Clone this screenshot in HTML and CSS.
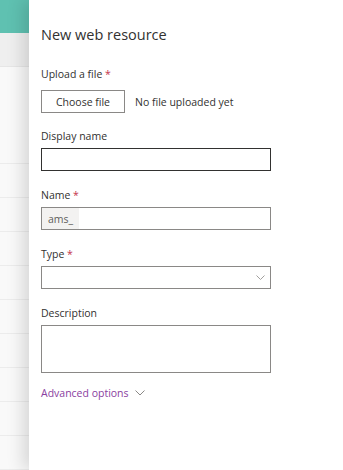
FILE: index.html
```html
<!DOCTYPE html>
<html lang="en">
<head>
  <meta charset="UTF-8">
  <title>New web resource</title>
  <link rel="stylesheet" href="styles.css">
</head>
<body>
  <div class="page">
    <div class="behind">
      <div class="topbar"></div>
      <div class="cmdbar"></div>
      <div class="row tall"></div>
      <div class="row"></div>
      <div class="row"></div>
      <div class="row"></div>
      <div class="row"></div>
      <div class="row"></div>
      <div class="row"></div>
      <div class="row"></div>
      <div class="row"></div>
      <div class="row"></div>
    </div>

    <div class="panel">
      <h1 class="title">New web resource</h1>

      <div class="field upload">
        <label class="label">Upload a file <span class="req">*</span></label>
        <div class="upload-row">
          <button class="choose">Choose file</button>
          <span class="nofile">No file uploaded yet</span>
        </div>
      </div>

      <div class="field">
        <label class="label">Display name</label>
        <div class="box focused"></div>
      </div>

      <div class="field">
        <label class="label">Name <span class="req">*</span></label>
        <div class="box">
          <span class="prefix">ams_</span>
        </div>
      </div>

      <div class="field">
        <label class="label">Type <span class="req">*</span></label>
        <div class="box select">
          <svg class="chev" width="9" height="5" viewBox="0 0 9 5"><path d="M0.5 0.5 L4.5 4.5 L8.5 0.5" fill="none" stroke="#a19f9d" stroke-width="1"/></svg>
        </div>
      </div>

      <div class="field">
        <label class="label">Description</label>
        <div class="box area"></div>
      </div>

      <div class="advanced">
        <span>Advanced options</span>
        <svg width="10" height="6" viewBox="0 0 10 6"><path d="M0.5 0.5 L5 5 L9.5 0.5" fill="none" stroke="#8a8886" stroke-width="1"/></svg>
      </div>
    </div>
  </div>
</body>
</html>
```

FILE: styles.css
```css
body { margin: 0; font-family: "Open Sans", "Noto Sans", Arial, sans-serif; color: #323130; }
.page { display: flex; width: 343px; height: 470px; overflow: hidden; }

.behind { width: 29px; flex-shrink: 0; background: #f9f9f9; }
.topbar { height: 33px; background: #5fc1b1; }
.cmdbar { height: 33px; background: #efefef; border-bottom: 1px solid #e6e6e6; }
.row { height: 33px; border-bottom: 1px solid #ececec; }
.row.tall { height: 96px; }

.panel { flex: 1; background: #fff; padding: 25px 0 0 12px; box-shadow: -6px 0 16px rgba(0, 0, 0, 0.14); position: relative; }
.title { margin: 0 0 21px; font-size: 14.5px; font-weight: 400; line-height: 20px; }

.field { width: 230px; margin-bottom: 16px; }
.label { display: block; font-size: 10.5px; line-height: 16px; margin-bottom: 4px; }
.req { color: #c4314b; }

.upload { margin-bottom: 15px; }
.upload .label { margin-bottom: 8px; }
.upload-row { display: flex; align-items: center; gap: 10px; }
.choose { width: 84px; height: 23px; padding: 0; background: #fff; border: 1px solid #8a8886; font: inherit; font-size: 10.5px; color: #323130; }
.nofile { font-size: 10.5px; }

.box { height: 23px; box-sizing: border-box; border: 1px solid #8a8886; display: flex; align-items: stretch; }
.box.focused { border-color: #323130; }
.prefix { width: 37px; background: #f3f2f1; color: #605e5c; font-size: 10.5px; display: flex; align-items: center; padding-left: 6px; box-sizing: border-box; }
.select { justify-content: flex-end; align-items: center; padding-right: 5px; }
.area { height: 48px; }

.advanced { display: flex; align-items: center; gap: 6px; margin-top: -4px; font-size: 10.5px; line-height: 16px; color: #8a3ea0; }
```
